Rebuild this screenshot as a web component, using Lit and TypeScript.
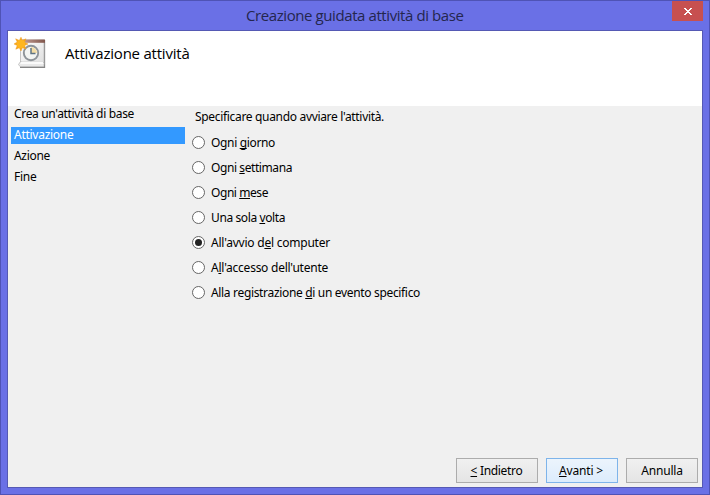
import { LitElement, html, css, svg } from "lit";
import { customElement, property } from "lit/decorators.js";

/** One line of text whose tracking is tuned so that it spans `span` pixels. */
@customElement("ui-label")
class UiLabel extends LitElement {
  @property() text = "";
  @property({ type: Number }) key = -1;
  @property({ type: Number }) span = 0;

  static styles = css`
    :host { display: block; white-space: pre; }
    .line { display: inline-block; }
    .key { text-decoration: underline 1px; text-underline-offset: 1px; text-decoration-skip-ink: none; }
  `;

  updated() {
    const line = this.renderRoot.querySelector(".line") as HTMLElement;
    line.style.letterSpacing = "0px";
    const natural = line.getBoundingClientRect().width;
    line.style.letterSpacing = `${(this.span - natural) / this.text.length}px`;
  }

  render() {
    const { text: t, key: k } = this;
    return k < 0
      ? html`<span class="line">${t}</span>`
      : html`<span class="line">${t.slice(0, k)}<span class="key">${t[k]}</span>${t.slice(k + 1)}</span>`;
  }
}

const steps: [string, number][] = [
  ["Crea un'attività di base", 120],
  ["Attivazione", 59.5],
  ["Azione", 36],
  ["Fine", 22.5],
];

const options: [string, number, number][] = [
  ["Ogni giorno", 5, 64],
  ["Ogni settimana", 5, 81],
  ["Ogni mese", 5, 57],
  ["Una sola volta", 9, 74],
  ["All'avvio del computer", 11, 119],
  ["All'accesso dell'utente", 1, 117],
  ["Alla registrazione di un evento specifico", 19, 209],
];

const taskIcon = svg`
  <defs>
    <linearGradient id="pg" x2="1" y2="1"><stop stop-color="#fff"/><stop offset="1" stop-color="#dedede"/></linearGradient>
    <linearGradient id="hd" x2="1"><stop stop-color="#c9a398"/><stop offset="1" stop-color="#80564c"/></linearGradient>
    <radialGradient id="sun"><stop stop-color="#ffc53a"/><stop offset="1" stop-color="#f49a0a"/></radialGradient>
  </defs>
  <path d="M6 30.300H30.500V3" fill="none" stroke="#858585" stroke-width="1.300"/>
  <path d="M6.500 3H30V27.500H6.500Z" fill="url(#pg)" stroke="#b8b8b8" stroke-width=".8"/>
  <path d="M4.500 27.500L6.500 24.500L30 25.500V29.500H6Z" fill="#e9e9e9" stroke="#aaa" stroke-width=".6"/>
  <path d="M6 27L7.500 24.500L29 25L29.500 27Z" fill="#fafafa"/>
  <path d="M7 2.500H31V5.800H7Z" fill="url(#hd)"/>
  <circle cx="17" cy="16" r="7.200" fill="#f3f5f3" stroke="#8e9499" stroke-width="1.900"/>
  <path d="M17 16V10A6 6 0 0 1 23 16Z" fill="#f4dda5"/>
  <path d="M17 11V16.500H21.500" fill="none" stroke="#5f7484" stroke-width="1.500"/>
  <path d="M7 .2L8.300 3.400L12 1.800L10.500 5.200L14 7L10.500 8.500L12 12L8.300 10.800L7 14L5.300 10.800L1.800 12.200L3.200 8.500L0 7L3.200 5L1.600 1.800L5.300 3.400Z" fill="url(#sun)" stroke="#f0a126" stroke-width=".5"/>
  <circle cx="7" cy="7" r="4" fill="#ffb61f"/>`;

@customElement("app-root")
class AppRoot extends LitElement {
  static styles = css`
    :host { display: block; font: 12px/16px "Noto Sans", "Open Sans", sans-serif; color: #000; }
    .window {
      box-sizing: border-box; width: 710px; height: 495px; overflow: hidden;
      background: #6a70e6; border: 1px solid #4f53b5;
      display: flex; flex-direction: column; padding: 0 6px 6px;
    }
    .bar { height: 29px; flex: none; display: grid; grid-template-columns: 239px 1fr 31px; }
    .title { font: 15px/20px "Open Sans", "Noto Sans", sans-serif; padding-top: 4px; color: #24264e; }
    .close { background: #c75050; height: 20px; display: grid; place-items: center; }
    .client {
      flex: 1; min-height: 0; border: 1px solid #5559b4; background: #f0f0f0;
      display: flex; flex-direction: column;
    }
    .head { background: #fff; height: 75px; flex: none; display: flex; }
    .icon { width: 34px; height: 34px; margin: 6px 0 0 6px; }
    .heading { font: 15px/20px "Open Sans", "Noto Sans", sans-serif; margin: 12px 0 0 17px; }
    .body { flex: 1; display: flex; }
    .steps { width: 174px; margin-left: 3px; }
    .step { height: 17px; margin-bottom: 4px; padding-left: 3px; }
    .step.on { background: #3399ff; color: #fff; }
    .form { margin-left: 7px; padding-top: 3px; }
    .prompt { margin: 0 0 10px 3px; }
    .option { display: flex; height: 16px; margin-bottom: 9px; gap: 6px; align-items: center; }
    .radio {
      box-sizing: border-box; width: 13px; height: 13px; border: 1px solid #666; border-radius: 50%;
      background: #fff; display: grid; place-items: center; margin-bottom: 1px;
    }
    .dot { width: 7px; height: 7px; border-radius: 50%; background: #222; }
    .foot { height: 29px; display: flex; justify-content: flex-end; gap: 8px; padding-right: 4px; flex: none; }
    .btn {
      box-sizing: border-box; height: 25px; border: 1px solid #acacac; padding-top: 4px;
      background: linear-gradient(#f0f0f0, #e5e5e5); display: flex; justify-content: center;
    }
    .back { width: 82px; padding-right: 1px; }
    .next { width: 72px; padding-right: 2px; border-color: #7eb4ea; background: linear-gradient(#ecf4fc, #dcecfc); }
    .cancel { width: 72px; }
  `;

  render() {
    return html`<div class="window">
      <div class="bar">
        <span></span>
        <ui-label class="title" text="Creazione guidata attività di base" span="217.500"></ui-label>
        <div class="close">
          <svg width="8" height="7" viewBox="0 0 8 7" shape-rendering="crispEdges">
            <path fill="#fff" d="M0 0h2v1h1v1h2v-1h1v-1h2v1h-1v1h-1v1h-1v1h1v1h1v1h1v1h-2v-1h-1v-1h-2v1h-1v1h-2v-1h1v-1h1v-1h1v-1h-1v-1h-1v-1h-1z"/>
          </svg>
        </div>
      </div>
      <div class="client">
        <div class="head">
          <svg class="icon" viewBox="0 0 34 34">${taskIcon}</svg>
          <ui-label class="heading" text="Attivazione attività" span="124.500"></ui-label>
        </div>
        <div class="body">
          <div class="steps">
            ${steps.map(([t, w], i) => html`<div class="step ${i === 1 ? "on" : ""}"><ui-label .text=${t} .span=${w}></ui-label></div>`)}
          </div>
          <div class="form">
            <ui-label class="prompt" text="Specificare quando avviare l'attività." span="189"></ui-label>
            ${options.map(([t, k, w], i) => html`<div class="option">
              <span class="radio">${i === 4 ? html`<span class="dot"></span>` : ""}</span>
              <ui-label .text=${t} .key=${k} .span=${w}></ui-label>
            </div>`)}
          </div>
        </div>
        <div class="foot">
          <div class="btn back"><ui-label text="< Indietro" key="0" span="52"></ui-label></div>
          <div class="btn next"><ui-label text="Avanti >" key="0" span="44"></ui-label></div>
          <div class="btn cancel"><ui-label text="Annulla" span="41.500"></ui-label></div>
        </div>
      </div>
    </div>`;
  }
}
